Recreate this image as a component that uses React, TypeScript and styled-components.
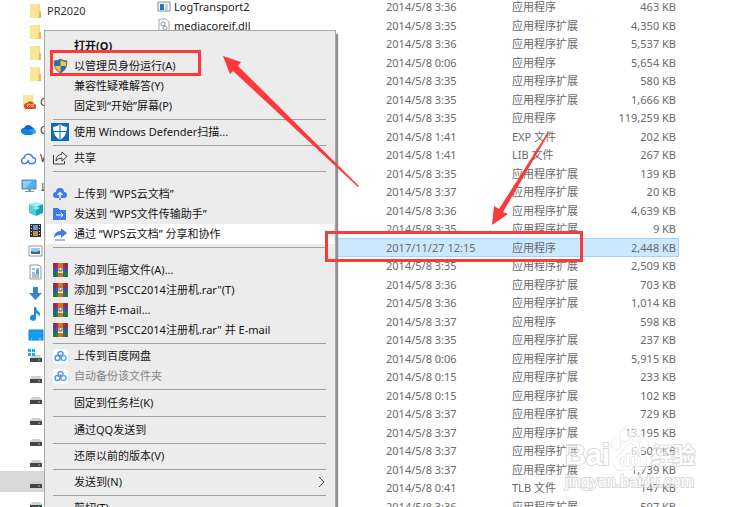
import React from "react";
import styled, { createGlobalStyle, css } from "styled-components";

const GlobalStyle = createGlobalStyle`
  * { box-sizing: border-box; }
  body {
    margin: 0;
    overflow: hidden;
    background: #fff;
    font-family: "Noto Sans", "Noto Sans CJK SC", sans-serif;
    font-size: 11px;
  }
  button { font: inherit; }
`;

const Window = styled.div`
  position: relative;
  display: flex;
  height: 100vh;
  overflow: hidden;
  background: #fff;
`;

/* ---------- navigation tree ---------- */

const Sidebar = styled.nav`
  flex: 0 0 140px;
  display: flex;
  flex-direction: column;
  gap: 7px;
`;

const Branch = styled.ul<{ $nested?: boolean }>`
  margin: 0;
  padding: ${(p) => (p.$nested ? 2 : 0)}px 0 0;
  list-style: none;
`;

const TreeItem = styled.li<{ $depth: number; $selected?: boolean; $low?: boolean }>`
  display: flex;
  align-items: center;
  gap: 4px;
  height: 21px;
  padding-top: ${(p) => (p.$low ? 7 : 1)}px;
  padding-left: ${(p) => (p.$depth ? 28 : 21)}px;
  background: ${(p) => (p.$selected ? "#d9d9d9" : "transparent")};
  color: #333;
  line-height: 20px;
  white-space: nowrap;

  svg { flex: none; }
`;

/* ---------- file list ---------- */

const FileTable = styled.table`
  flex: 1;
  align-self: flex-start;
  margin: -2px 57px 0 15px;
  border-collapse: collapse;
  table-layout: fixed;
  color: #6a6a6a;
`;

const FileRow = styled.tr<{ $selected: boolean }>`
  height: 18px;
  &:nth-child(even) { height: 19px; }
  ${(p) =>
    p.$selected &&
    css`
      background: #cce8ff;
      outline: 1px solid #a3d3f7;
      outline-offset: -1px;
    `}
`;

const Cell = styled.td<{ $width?: number; $right?: boolean }>`
  ${(p) => p.$width && `width: ${p.$width}px;`}
  padding: 0 ${(p) => (p.$right ? 3 : 0)}px 0 0;
  line-height: 18px;
  text-align: ${(p) => (p.$right ? "right" : "left")};
  white-space: nowrap;
`;

const FileName = styled.span`
  display: flex;
  align-items: center;
  gap: 3px;
  height: 18px;
  padding-left: 2px;
  color: #222;
`;

/* ---------- context menu ---------- */

const Menu = styled.ul`
  position: absolute;
  top: 30px;
  left: 44px;
  width: 292px;
  margin: 0;
  padding: 5px 1px;
  list-style: none;
  background: #ececec;
  border: 1px solid #a8a8a8;
  box-shadow: 2px 4px 1px #909090;
`;

const MenuButton = styled.button<{ $strong?: boolean; $active?: boolean }>`
  display: grid;
  grid-template-columns: 20px 1fr 8px;
  column-gap: 3px;
  align-items: center;
  width: 100%;
  height: 20px;
  padding: 0 8px 0 5px;
  border: 0;
  background: ${(p) => (p.$active ? "#fff" : "transparent")};
  color: #151515;
  font-weight: ${(p) => (p.$strong ? 700 : 400)};
  line-height: 20px;
  text-align: left;
  white-space: nowrap;

  &:disabled { color: #858585; }
`;

const IconSlot = styled.span`
  display: grid;
  place-items: center;
  width: 18px;
  height: 20px;
  svg { flex: none; }
`;

const Divider = styled.li<{ $after: number }>`
  height: 1px;
  margin: 3px 8px ${(p) => p.$after}px 7px;
  background: #a0a0a0;
`;

/* ---------- overlays ---------- */

const Marker = styled.div<{ $x: number; $y: number; $w: number; $h: number }>`
  position: absolute;
  left: ${(p) => p.$x}px;
  top: ${(p) => p.$y}px;
  width: ${(p) => p.$w}px;
  height: ${(p) => p.$h}px;
  border: 3px solid #fc3a3a;
  pointer-events: none;
`;

const Arrows = styled.svg`
  position: absolute;
  top: 0;
  left: 0;
  pointer-events: none;
`;

const Watermark = styled.div`
  position: absolute;
  left: 565px;
  top: 427px;
  pointer-events: none;
  color: #fff;
  font-family: "Liberation Sans", "Noto Sans CJK SC", sans-serif;
  font-weight: 700;
  -webkit-text-stroke: 2px #c8c8c8;
  paint-order: stroke fill;
  opacity: 0.65;
  white-space: nowrap;
`;

const Brand = styled.div`
  display: flex;
  align-items: flex-end;
  height: 45px;
  font-size: 29px;
  line-height: 34px;
`;

const BrandSuffix = styled.span`
  padding-left: 2px;
  font-size: 22px;
  line-height: 32px;
`;

const Domain = styled.div`
  font-size: 16px;
  font-weight: 400;
  line-height: 20px;
`;

/* ---------- icons ---------- */

const Folder = ({ cloud = false }: { cloud?: boolean }) => (
  <svg width="15" height="16" viewBox="0 0 15 16">
    <path d="M2 1h10v7h1v7H2z" fill="#f7dc85" />
    <path d="M2 1h8v14H2z" fill="#fae59b" />
    <path d="M11 8h2v7h-3v-1h1z" fill="#e5bd55" />
    {cloud && (
      <g>
        <path d="M6 15a3 3 0 0 1 0-6 4 4 0 0 1 7 1 2.500 2.500 0 0 1 0 5z" fill="#da4a22" />
        <path d="M7 13a1.500 1.500 0 1 1 2-2l2 2a1.500 1.500 0 1 0 0-3L8 13" fill="none" stroke="#ffd6c4" />
      </g>
    )}
  </svg>
);

const OneDrive = () => (
  <svg width="15" height="12" viewBox="0 0 15 12">
    <path d="M3 10a3 3 0 0 1 0-6 4.500 4.500 0 0 1 8-1 4 4 0 0 1 1 7z" fill="#0f65bd" />
    <path d="M2 10a3 3 0 0 1 1-5q2-1 4 1l6 3q-1 2-3 2H4z" fill="#1686dc" />
    <path d="M7 6l4-1a3 3 0 0 1 3 5z" fill="#2da0ec" />
  </svg>
);

const WpsCloud = () => (
  <svg width="15" height="13" viewBox="0 0 15 13" fill="none" stroke="#4b80de" strokeWidth="1.500">
    <path d="M8 8L5 11.500H3.500a2.700 2.700 0 0 1-.5-5.400 4.500 4.500 0 0 1 8.800-.6 3 3 0 0 1-.3 6H8.500L7 9.500" />
  </svg>
);

const Computer = () => (
  <svg width="16" height="14" viewBox="0 0 16 14">
    <path d="M1 1h14v9H1z" fill="#4fb2ee" stroke="#6d8798" />
    <path d="M2 2h9L5 9H2z" fill="#86d0fa" />
    <path d="M7 10h3v2H7zM4 12h9v1H4z" fill="#8299a8" />
  </svg>
);

const Cube = () => (
  <svg width="16" height="16" viewBox="0 0 16 16">
    <path d="M8 1l7 2-7 3-7-3z" fill="#a6eef4" />
    <path d="M1 3l7 3v9l-7-3z" fill="#53cbd9" />
    <path d="M15 3L8 6v9l7-3z" fill="#16a4bb" />
    <path d="M4 7l4-2 4 2-4 2z" fill="#8fe6ee" />
  </svg>
);

const Film = () => (
  <svg width="15" height="15" viewBox="0 0 15 15">
    <path d="M2 1h11v13H2z" fill="#2d2f33" />
    <path d="M5 2h5v5H5z" fill="#6c96d8" />
    <path d="M5 8h5v5H5z" fill="#b39443" />
    <path d="M3.500 2v12M11.500 2v12" stroke="#ddd" strokeWidth="1" strokeDasharray="1 2" />
  </svg>
);

const Picture = () => (
  <svg width="15" height="12" viewBox="0 0 15 12">
    <path d="M1 1h13v10H1z" fill="#fff" stroke="#8f979d" />
    <path d="M3 3h9v6H3z" fill="#91cdf0" />
    <path d="M3 6l4 1 5-1v3H3z" fill="#426879" />
  </svg>
);

const Document = () => (
  <svg width="15" height="16" viewBox="0 0 15 16">
    <path d="M2 1h9l2 2v12H2z" fill="#fff" stroke="#8f979d" />
    <path d="M4 5h3M8 5h3M4 9h3M4 11h7M4 13h7" stroke="#64788a" />
    <path d="M8 6h3v4H8z" fill="#4ba6dd" />
  </svg>
);

const Download = () => (
  <svg width="15" height="15" viewBox="0 0 15 15">
    <path d="M5 1h5v6h4l-6.500 7L1 7h4z" fill="#3585d4" />
  </svg>
);

const Music = () => (
  <svg width="15" height="16" viewBox="0 0 15 16">
    <path d="M6 1h2q0 3 3 5 2 2 0 5 0-3-3-4v5a3 3 0 1 1-2-3z" fill="#1f8ade" />
  </svg>
);

const Desktop = () => (
  <svg width="16" height="13" viewBox="0 0 16 13">
    <path d="M1 1h14v10H1z" fill="#149bf3" stroke="#1480ca" />
    <path d="M3 10h1M11 10h2" stroke="#c7ebff" />
  </svg>
);

const Drive = ({ system = false }: { system?: boolean }) => (
  <svg width="15" height={system ? 14 : 8} viewBox={system ? "0 -6 15 14" : "0 0 15 8"}>
    <path d="M4 0h8l2 3H2z" fill="#cdcfd0" />
    <path d="M2 3h12v4H2z" fill="#43474a" />
    <path d="M10 5h2" stroke="#5ee08c" />
    {system && <path d="M0-6h3v3H0zM4-6h3v3H4zM0-2h3v3H0zM4-2h3v3H4z" fill="#21aee8" />}
  </svg>
);

const AppFile = () => (
  <svg width="14" height="12" viewBox="0 0 14 12">
    <path d="M1 1h12v9H1z" fill="#fff" stroke="#7d8b96" />
    <path d="M3 3h4v6H3z" fill="#1f76b8" />
    <path d="M8 4h3M8 6h3M8 8h3" stroke="#8fa6b8" />
  </svg>
);

const DllFile = () => (
  <svg width="14" height="15" viewBox="0 0 14 15">
    <path d="M2 1h7l3 3v10H2z" fill="#fff" stroke="#a5a9ad" />
    <circle cx="6" cy="6" r="2" fill="none" stroke="#8293a4" />
    <circle cx="8" cy="10" r="2" fill="none" stroke="#8293a4" />
  </svg>
);

const Shield = () => (
  <svg width="15" height="16" viewBox="0 0 15 16">
    <path d="M7.500 1Q10 3 14 3q0 9-6.500 12Q1 12 1 3q4 0 6.500-2z" fill="#2c6dad" stroke="#62717c" />
    <path d="M7.500 2Q10 4 13 4v4H7.500z" fill="#f5c73d" />
    <path d="M7.500 8v6Q3 12 2 8z" fill="#f5c73d" />
  </svg>
);

const Defender = () => (
  <svg width="18" height="18" viewBox="0 0 18 18">
    <path d="M0 0h18v18H0z" fill="#0b6cbd" />
    <path d="M9 1q3 3 7 3 0 9-7 13Q2 13 2 4q4 0 7-3z" fill="#fff" />
    <path d="M9 1v16M2 8.500h14" stroke="#0b6cbd" />
  </svg>
);

const Share = () => (
  <svg width="16" height="14" viewBox="0 0 16 14" fill="none" stroke="#3d3d3d">
    <path d="M1.500 4v9h11v-3" />
    <path d="M4 10q0-6 6-7V1l5 4.500-5 4.500V7Q6 7 4 10z" />
  </svg>
);

const UploadCloud = () => (
  <svg width="14" height="14" viewBox="0 0 14 14">
    <path d="M3 11a3 3 0 0 1 0-6 4 4 0 0 1 8 0 3 3 0 0 1 0 6z" fill="#4278e8" />
    <path d="M7 12V6M4.500 8L7 5.500 9.500 8" fill="none" stroke="#ececec" strokeWidth="1.500" />
    <path d="M7 11v2" stroke="#4278e8" strokeWidth="1.500" />
  </svg>
);

const SendFolder = () => (
  <svg width="14" height="12" viewBox="0 0 14 12">
    <path d="M0 1q0-1 1-1h4l2 2h6v10H0z" fill="#4278e8" />
    <path d="M3 7h7M7.500 4.500L10 7 7.500 9.500" fill="none" stroke="#fff" />
  </svg>
);

const Forward = () => (
  <svg width="14" height="13" viewBox="0 0 14 13">
    <path d="M1 10q0-7 7-7V0l6 5-6 5V7Q3 7 1 10z" fill="#4278e8" />
    <path d="M2 12h10" stroke="#4278e8" />
  </svg>
);

const Archive = () => (
  <svg width="15" height="14" viewBox="0 0 15 14">
    <path d="M0 0h15v5H0z" fill="#a53048" />
    <path d="M0 5h15v4H0z" fill="#3b58b5" />
    <path d="M0 9h15v5H0z" fill="#278044" />
    <path d="M2 0v14M13 0v14" stroke="#222" strokeOpacity=".3" />
    <path d="M5 0h5v14H5z" fill="#c77430" />
    <path d="M5 5h5v5H5z" fill="#f2e9d2" />
    <path d="M6 5v3h3V5" fill="none" stroke="#7b5c40" />
  </svg>
);

const NetDisk = () => (
  <svg width="15" height="15" viewBox="0 0 15 15">
    <rect width="15" height="15" rx="3" fill="#fff" />
    <g fill="none" strokeWidth="1.500">
      <circle cx="7.500" cy="5" r="2.500" stroke="#4b9df0" />
      <circle cx="4.500" cy="9" r="2.500" stroke="#3f9af0" />
      <circle cx="10.500" cy="9" r="2.500" stroke="#5bb1f3" />
    </g>
    <circle cx="7.500" cy="6.500" r="1.200" fill="#ee6a79" />
  </svg>
);

const Chevron = () => (
  <svg width="8" height="12" viewBox="0 0 8 12" fill="none" stroke="#444">
    <path d="M1 1l5 5-5 5" />
  </svg>
);

const Paw = () => (
  <svg width="39" height="45" viewBox="0 0 39 45" fill="#fff" stroke="#c8c8c8">
    <ellipse cx="6" cy="17" rx="4.500" ry="6" />
    <ellipse cx="15" cy="8" rx="5" ry="6.500" />
    <ellipse cx="26" cy="8" rx="5" ry="6.500" />
    <ellipse cx="34" cy="18" rx="4.500" ry="6" />
    <path d="M20 17q5 0 7 5t7 8q4 4 2 10-3 4-9 3-7-1-13 0-8 1-10-4-1-5 3-9 5-4 7-8 2-5 6-5z" />
    <text x="10" y="39" fontSize="17" fontWeight="700">du</text>
  </svg>
);

/* ---------- data ---------- */

const EXT = "应用程序扩展";
const EXE = "应用程序";

const files: [string, string, string][] = [
  ["2014/5/8 3:36", EXE, "463 KB"],
  ["2014/5/8 3:35", EXT, "4,350 KB"],
  ["2014/5/8 3:36", EXT, "5,537 KB"],
  ["2014/5/8 0:06", EXE, "5,654 KB"],
  ["2014/5/8 3:35", EXT, "580 KB"],
  ["2014/5/8 3:35", EXT, "1,666 KB"],
  ["2014/5/8 3:35", EXE, "119,259 KB"],
  ["2014/5/8 1:41", "EXP 文件", "202 KB"],
  ["2014/5/8 1:41", "LIB 文件", "267 KB"],
  ["2014/5/8 3:35", EXT, "139 KB"],
  ["2014/5/8 3:37", EXT, "20 KB"],
  ["2014/5/8 3:36", EXT, "4,639 KB"],
  ["2014/5/8 3:35", EXT, "9 KB"],
  ["2017/11/27 12:15", EXE, "2,448 KB"],
  ["2014/5/8 3:35", EXT, "2,509 KB"],
  ["2014/5/8 3:36", EXT, "703 KB"],
  ["2014/5/8 3:36", EXT, "1,014 KB"],
  ["2014/5/8 3:37", EXE, "598 KB"],
  ["2014/5/8 3:35", EXT, "237 KB"],
  ["2014/5/8 0:06", EXT, "5,915 KB"],
  ["2014/5/8 0:15", EXT, "233 KB"],
  ["2014/5/8 0:15", EXT, "102 KB"],
  ["2014/5/8 3:37", EXT, "729 KB"],
  ["2014/5/8 3:37", EXT, "13,195 KB"],
  ["2014/5/8 3:37", EXT, "6,501 KB"],
  ["2014/5/8 3:37", EXT, "1,739 KB"],
  ["2014/5/8 0:41", "TLB 文件", "147 KB"],
  ["2014/5/8 3:36", EXT, "597 KB"],
];

const fileNames = [
  <><AppFile />LogTransport2</>,
  <><DllFile />mediacoreif.dll</>,
];

type Entry = {
  label: string;
  icon?: React.ReactNode;
  strong?: boolean;
  active?: boolean;
  disabled?: boolean;
  submenu?: boolean;
};

/* A number is a divider, with that much space below its line. */
const menu: (Entry | number)[] = [
  { label: "打开(O)", strong: true },
  { label: "以管理员身份运行(A)", icon: <Shield /> },
  { label: "兼容性疑难解答(Y)" },
  { label: "固定到“开始”屏幕(P)" },
  2,
  { label: "使用 Windows Defender扫描...", icon: <Defender /> },
  2,
  { label: "共享", icon: <Share /> },
  12,
  { label: "上传到 “WPS云文档”", icon: <UploadCloud /> },
  { label: "发送到 “WPS文件传输助手”", icon: <SendFolder /> },
  { label: "通过 “WPS云文档” 分享和协作", icon: <Forward />, active: true },
  12,
  { label: "添加到压缩文件(A)...", icon: <Archive /> },
  { label: '添加到 "PSCC2014注册机.rar"(T)', icon: <Archive /> },
  { label: "压缩并 E-mail...", icon: <Archive /> },
  { label: '压缩到 "PSCC2014注册机.rar" 并 E-mail', icon: <Archive /> },
  2,
  { label: "上传到百度网盘", icon: <NetDisk /> },
  { label: "自动备份该文件夹", icon: <NetDisk />, disabled: true },
  3,
  { label: "固定到任务栏(K)" },
  3,
  { label: "通过QQ发送到" },
  2,
  { label: "还原以前的版本(V)" },
  2,
  { label: "发送到(N)", submenu: true },
  2,
  { label: "剪切(T)" },
];

const roots: [React.ReactNode, string][] = [
  [<Folder cloud />, "Creative"],
  [<OneDrive />, "OneDrive"],
  [<WpsCloud />, "WPS"],
];

const places = [<Cube />, <Film />, <Picture />, <Document />, <Download />, <Music />, <Desktop />, <Drive system />];
const drives = [0, 1, 2, 3, 4, 5, 6];
const SELECTED_DRIVE = 5;
const SELECTED_FILE = 13;

export default function App() {
  return (
    <Window>
      <GlobalStyle />
      <Sidebar>
        <Branch>
          <TreeItem $depth={1}><Folder />PR2020</TreeItem>
          {[0, 1, 2].map((i) => <TreeItem key={i} $depth={1}><Folder /></TreeItem>)}
        </Branch>
        {roots.map(([icon, label]) => (
          <Branch key={label}><TreeItem $depth={0}>{icon}{label}</TreeItem></Branch>
        ))}
        <div>
          <Branch><TreeItem $depth={0}><Computer />此电脑</TreeItem></Branch>
          <Branch $nested>
            {places.map((icon, i) => <TreeItem key={i} $depth={1}>{icon}</TreeItem>)}
            {drives.map((i) => (
              <TreeItem key={i} $depth={1} $low $selected={i === SELECTED_DRIVE}><Drive /></TreeItem>
            ))}
          </Branch>
        </div>
      </Sidebar>

      <FileTable>
        <tbody>
          {files.map(([date, type, size], i) => (
            <FileRow key={i} $selected={i === SELECTED_FILE}>
              <Cell $width={231}>{fileNames[i] && <FileName>{fileNames[i]}</FileName>}</Cell>
              <Cell $width={126}>{date}</Cell>
              <Cell $width={84}>{type}</Cell>
              <Cell $right>{size}</Cell>
            </FileRow>
          ))}
        </tbody>
      </FileTable>

      <Menu>
        {menu.map((entry, i) =>
          typeof entry === "number" ? (
            <Divider key={i} $after={entry} role="separator" />
          ) : (
            <li key={i}>
              <MenuButton type="button" $strong={entry.strong} $active={entry.active} disabled={entry.disabled}>
                <IconSlot>{entry.icon}</IconSlot>
                <span>{entry.label}</span>
                {entry.submenu && <Chevron />}
              </MenuButton>
            </li>
          )
        )}
      </Menu>

      <Watermark>
        <Brand>
          <span>Bai</span>
          <Paw />
          <BrandSuffix>经验</BrandSuffix>
        </Brand>
        <Domain>jingyan.baidu.com</Domain>
      </Watermark>

      <Marker $x={50} $y={50} $w={151} $h={26} />
      <Marker $x={325} $y={231} $w={258} $h={31} />
      <Arrows width="736" height="507" viewBox="0 0 736 507" fill="#fc3a3a">
        <path d="M223 56L241 62L238 66L359 186L358 187L233 71L230 74Z" />
        <path d="M492 225L494 206L499 209L548 132L549 133L503 212L508 214Z" />
      </Arrows>
    </Window>
  );
}
